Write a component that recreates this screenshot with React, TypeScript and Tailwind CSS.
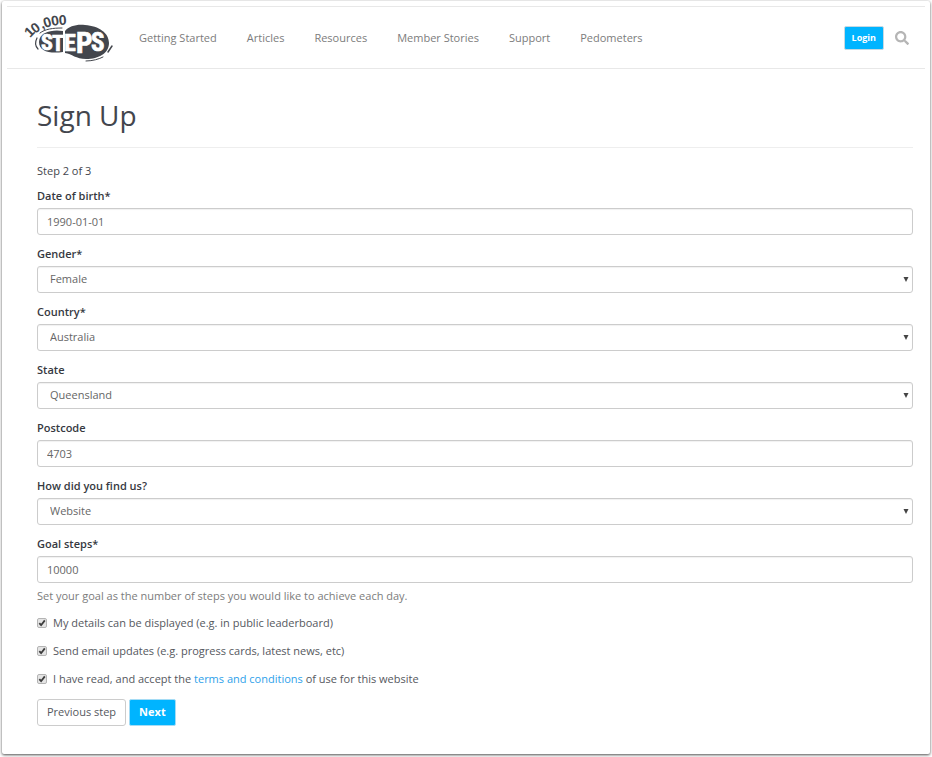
import { FaSearch } from "react-icons/fa";

const navLinks = [
  "Getting Started",
  "Articles",
  "Resources",
  "Member Stories",
  "Support",
  "Pedometers",
];

const controlClass =
  "block w-full h-[27px] rounded-[3px] border border-[#cccccc] bg-white text-[11px] text-[#666666] shadow-[inset_0_1px_1px_rgba(0,0,0,0.06)]";

type FieldProps = {
  id: string;
  label: string;
  value: string;
  options?: string[];
};

const Field = ({ id, label, value, options }: FieldProps) => (
  <div className="mb-[11px]">
    <label
      htmlFor={id}
      className="block h-5 text-[11px] leading-4 font-semibold text-[#36393f]"
    >
      {label}
    </label>
    {options ? (
      <div className="relative">
        <select
          id={id}
          defaultValue={value}
          className={`${controlClass} appearance-none px-3`}
        >
          {options.map((option) => (
            <option key={option}>{option}</option>
          ))}
        </select>
        <svg
          viewBox="0 0 6 5"
          className="pointer-events-none absolute top-[11px] right-1 h-[5px] w-[6px] fill-[#444444]"
        >
          <path d="M0.5 0h5L3 5z" />
        </svg>
      </div>
    ) : (
      <input
        id={id}
        type="text"
        defaultValue={value}
        className={`${controlClass} px-[9px]`}
      />
    )}
  </div>
);

type CheckProps = {
  id: string;
  children: React.ReactNode;
};

const Check = ({ id, children }: CheckProps) => (
  <div className="flex items-center gap-[6px]">
    <span className="relative flex">
      <input
        id={id}
        type="checkbox"
        defaultChecked
        className="peer h-[10px] w-[10px] appearance-none rounded-[2px] border border-[#b4b4b4] bg-[#e4e4e4]"
      />
      <svg
        viewBox="0 0 10 10"
        className="pointer-events-none absolute inset-0 hidden h-[10px] w-[10px] fill-none stroke-[#3c3c3c] peer-checked:block"
      >
        <path d="M2.3 5.2 4.1 7.2 7.8 2.4" strokeWidth="1.8" />
      </svg>
    </span>
    <label htmlFor={id} className="text-[11px] leading-4 text-[#55585e]">
      {children}
    </label>
  </div>
);

const Logo = () => (
  <svg
    viewBox="0 0 90 48"
    className="h-12 w-[90px] overflow-visible fill-[#43464d]"
    role="img"
    aria-label="10,000 Steps"
  >
    <text
      x="5 10 17 20 27 34"
      y="24 20 15 14 12 11"
      rotate="-45 -36 -24 -18 -10 -3"
      fontSize="14"
      className="font-['Liberation_Sans_Narrow','Liberation_Sans',sans-serif] font-bold"
    >
      10,000
    </text>
    {/* heel */}
    <path d="M38 17C28 15 14 18 14 28C14 37 24 40 38 38Z" />
    {/* sole */}
    <path d="M40 17C44 12 52 10 60 11C74 12 84 19 84 29C84 39 74 45 61 45C51 45 47 40 40 39Z" />
    <text
      x="16 27 39 51 66"
      y="36 37 37 39 37"
      strokeWidth="0.7"
      className="fill-white stroke-white font-['Liberation_Sans_Narrow','Roboto_Condensed',sans-serif] font-bold"
    >
      <tspan fontSize="22">S</tspan>
      <tspan fontSize="22">T</tspan>
      <tspan fontSize="24">E</tspan>
      <tspan fontSize="29">P</tspan>
      <tspan fontSize="25">S</tspan>
    </text>
    <g className="fill-none stroke-[#43464d]" strokeLinecap="round">
      <path d="M12 24C10 28 10 32 13 35" strokeWidth="1.2" />
      <path d="M15 19C20 15 28 14 37 14" strokeWidth="1" />
      <path d="M83 38 87 32" strokeWidth="1.5" />
      <path d="M61 47C68 47 74 45 78 43" strokeWidth="1" />
    </g>
  </svg>
);

const App = () => {
  return (
    <div className="min-h-screen bg-white px-[2px] pt-px pb-[2px] font-['Open_Sans',sans-serif]">
      <div className="rounded-[2px] bg-white px-[5px] pt-[5px] pb-7 shadow-[0_1px_3px_rgba(0,0,0,0.7)]">
        <header className="flex items-center border-y border-[#e8e8e8] pt-[7px] pr-4 pb-[6px] pl-[18px]">
          <a href="#" className="mr-6">
            <Logo />
          </a>
          <nav className="flex flex-1 gap-[30px] text-[11px] text-[#7c7c7c]">
            {navLinks.map((link) => (
              <a key={link} href="#">
                {link}
              </a>
            ))}
          </nav>
          <button className="mr-[11px] h-6 rounded-[2px] border border-[#c6d9e2] bg-[#00b4ff] px-[7px] text-[9px] font-bold text-white">
            Login
          </button>
          <button aria-label="Search" className="text-[#b5b5b5]">
            <FaSearch size={14} />
          </button>
        </header>

        <main className="pr-3 pl-[30px]">
          <h1 className="mt-[23px] border-b border-[#eeeeee] pb-[9px] text-[28px] leading-[46px] text-[#43464d]">
            Sign Up
          </h1>
          <p className="mt-[15px] mb-[9px] text-[11px] leading-4 text-[#43464d]">
            Step 2 of 3
          </p>
          <form>
            <Field id="dob" label="Date of birth*" value="1990-01-01" />
            <Field
              id="gender"
              label="Gender*"
              value="Female"
              options={["Female", "Male"]}
            />
            <Field
              id="country"
              label="Country*"
              value="Australia"
              options={["Australia"]}
            />
            <Field
              id="state"
              label="State"
              value="Queensland"
              options={["Queensland"]}
            />
            <Field id="postcode" label="Postcode" value="4703" />
            <Field
              id="source"
              label="How did you find us?"
              value="Website"
              options={["Website"]}
            />
            <Field id="goal" label="Goal steps*" value="10000" />
            <p className="-mt-[6px] mb-[11px] text-[11px] leading-4 text-[#7c7c7c]">
              Set your goal as the number of steps you would like to achieve
              each day.
            </p>
            <div className="flex flex-col gap-3">
              <Check id="public">
                My details can be displayed (e.g. in public leaderboard)
              </Check>
              <Check id="email">
                Send email updates (e.g. progress cards, latest news, etc)
              </Check>
              <Check id="terms">
                I have read, and accept the{" "}
                <a href="#" className="text-[#2e9fea]">
                  terms and conditions
                </a>{" "}
                of use for this website
              </Check>
            </div>
            <div className="mt-3 flex gap-[3px]">
              <button
                type="button"
                className="h-[27px] rounded-[3px] border border-[#cccccc] bg-white px-[9px] text-[11px] text-[#55585e]"
              >
                Previous step
              </button>
              <button
                type="button"
                className="h-[27px] rounded-[2px] border border-[#a5dcf5] bg-[#00b4ff] px-[9px] text-[11px] font-bold text-white"
              >
                Next
              </button>
            </div>
          </form>
        </main>
      </div>
    </div>
  );
};

export default App;
